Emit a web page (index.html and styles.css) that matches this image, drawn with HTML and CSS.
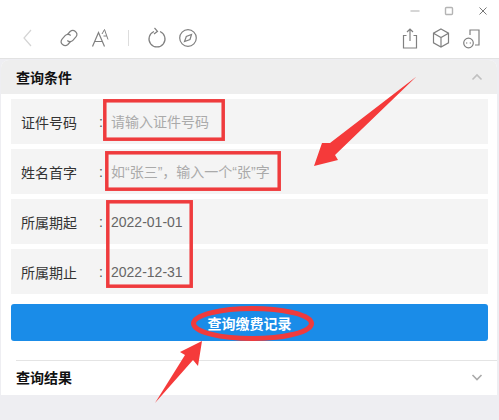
FILE: index.html
```html
<!DOCTYPE html>
<html lang="zh-CN">
<head>
    <meta charset="UTF-8">
    <meta name="viewport" content="width=device-width, initial-scale=1.0">
    <title>查询缴费记录</title>
    <link rel="stylesheet" href="styles.css">
</head>
<body>

<!-- Window controls -->
<div class="window-bar">
    <svg class="win-icon" viewBox="0 0 12 12"><path d="M1.5 6h9" stroke="#c4c4c4" stroke-width="1.4" fill="none"/></svg>
    <svg class="win-icon" viewBox="0 0 12 12"><rect x="2.5" y="2.5" width="7" height="7" rx="1" stroke="#b4b4b4" stroke-width="1.4" fill="none"/></svg>
    <svg class="win-icon" viewBox="0 0 12 12"><path d="M2.5 2.5l7 7M9.5 2.5l-7 7" stroke="#777" stroke-width="1" fill="none"/></svg>
</div>

<!-- Toolbar -->
<div class="toolbar">
    <div class="tool-group">
        <svg class="tool tool-back" viewBox="0 0 24 24"><path d="M15 4l-7 8 7 8" stroke="#d4d4d4"/></svg>
        <svg class="tool tool-link" viewBox="0 0 24 24"><path d="M10.500 8.500l2.600-3a4 4 0 0 1 6 5.200l-3.200 3.600a3.800 3.800 0 0 1-5.600.2"/><path d="M13.500 15.500l-2.600 3a4 4 0 0 1-6-5.200l3.200-3.600a3.800 3.800 0 0 1 5.600-.2"/></svg>
        <svg class="tool tool-font" viewBox="0 0 24 24"><path d="M4.500 20.500L10.500 6.500 16.500 20.500M6.800 15.500h7.400"/><path d="M14 8L16.500 3.500 20 13.500M15.500 10h3.300" stroke-width="1"/></svg>
        <span class="tool-sep"></span>
        <svg class="tool tool-refresh" viewBox="0 0 24 24"><path d="M9 5.500a8 8 0 1 0 6 0"/><path d="M9.500 2l3 3.300-3.500 2.700"/></svg>
        <svg class="tool tool-compass" viewBox="0 0 24 24"><circle cx="12" cy="12" r="8.300"/><path d="M15.500 8.500l-1.500 5-5.500 2 1.800-5z"/></svg>
    </div>
    <div class="tool-group">
        <svg class="tool" viewBox="0 0 24 24"><path d="M8.500 9.500H5.500v12.500h13V9.500h-3M12 15V3M9 6l3-3 3 3"/></svg>
        <svg class="tool tool-cube" viewBox="0 0 24 24"><path d="M12 3l7.500 4.200v9.600L12 21l-7.500-4.200V7.200zM4.500 7.200l7.500 4.300 7.500-4.300M12 11.500V21"/></svg>
        <svg class="tool tool-mini" viewBox="0 0 24 24"><path d="M10 9V4h9v15h-4"/><circle cx="8.500" cy="17" r="4.800"/><path d="M6.300 17h.9M9.800 17h.9" stroke-width="1.600"/></svg>
    </div>
</div>

<!-- Search panel -->
<div class="panel">
    <div class="panel-head">
        <strong>查询条件</strong>
        <svg class="arrow-icon" viewBox="0 0 14 8"><path d="M2.500 6.500L7 2l4.500 4.500" stroke="#c0c0c0"/></svg>
    </div>

    <div class="form-row">
        <label for="idNo">证件号码</label><span class="colon">:</span>
        <input id="idNo" type="text" placeholder="请输入证件号码">
    </div>
    <div class="form-row">
        <label for="nameInitial">姓名首字</label><span class="colon">:</span>
        <input id="nameInitial" type="text" placeholder="如“张三”，输入一个“张”字">
    </div>
    <div class="form-row">
        <label for="dateFrom">所属期起</label><span class="colon">:</span>
        <input id="dateFrom" type="text" value="2022-01-01">
    </div>
    <div class="form-row">
        <label for="dateTo">所属期止</label><span class="colon">:</span>
        <input id="dateTo" type="text" value="2022-12-31">
    </div>

    <button class="search-btn" type="button">查询缴费记录</button>

    <div class="panel-foot">
        <strong>查询结果</strong>
        <svg class="arrow-icon" viewBox="0 0 14 8"><path d="M2.500 2L7 6.500 11.500 2" stroke="#aaa"/></svg>
    </div>
</div>

<!-- Red marks drawn over the screenshot -->
<svg class="marks" viewBox="0 0 499 420">
    <g fill="none" stroke="#ef3b3d" stroke-width="3.500">
        <rect x="104.800" y="100.800" width="118.400" height="38.400"/>
        <rect x="106.800" y="152.800" width="172.400" height="36.400"/>
        <rect x="107.800" y="201.800" width="83.400" height="84.400"/>
    </g>
    <ellipse cx="252.500" cy="323.500" rx="59" ry="15" fill="none" stroke="#ef3b3d" stroke-width="5"/>
    <path d="M416.500 76.500L330 143l-8 0-8 23 24-6-3-5z" fill="#f53a3a"/>
    <path d="M155 403L185 355l-5-3 22-11-4 25-5-6z" fill="#f53a3a"/>
</svg>

</body>
</html>
```

FILE: styles.css
```css
/* Basic styling */
body {
    margin: 0;
    height: 420px;
    overflow: hidden;
    background-color: #eeeef2;
    font-family: "Liberation Sans", "Noto Sans CJK SC", sans-serif;
    font-size: 14px;
    color: #333333;
}

/* Window controls */
.window-bar {
    display: flex;
    justify-content: flex-end;
    gap: 22px;
    height: 22px;
    padding-right: 10px;
    background-color: #ffffff;
    align-items: center;
}

.win-icon {
    width: 12px;
    height: 12px;
}

/* Toolbar */
.toolbar {
    display: flex;
    justify-content: space-between;
    align-items: center;
    height: 31px;
    padding: 0 15px 5px 16px;
    background-color: #ffffff;
    border-bottom: 1px solid #e2e2e2;
}

.tool-group {
    display: flex;
    align-items: center;
    gap: 7px;
}

.tool {
    width: 24px;
    height: 24px;
    fill: none;
    stroke: #808080;
    stroke-width: 1.2;
}

.tool-link {
    margin-left: 10px;
}

.tool-sep {
    width: 1px;
    height: 16px;
    margin: 0 9px 0 9px;
    background-color: #dddddd;
}

/* Search panel */
.panel {
    margin: 1px 2px 0 1px;
    background-color: #ffffff;
    border-radius: 8px 8px 0 0;
}

.panel-head,
.panel-foot {
    display: flex;
    justify-content: space-between;
    align-items: center;
    height: 34px;
    padding: 0 13px 0 15px;
    color: #111111;
}

.panel-head {
    background-color: #eeeeee;
    border-radius: 8px 8px 0 0;
    margin-bottom: 5px;
}

.panel-foot {
    height: 32px;
    margin: 19px 0 0 15px;
    padding-left: 0;
    padding-bottom: 2px;
    border-top: 1px solid #e4e4e4;
}

.arrow-icon {
    width: 14px;
    height: 8px;
    fill: none;
    stroke-width: 1.6;
}

.form-row {
    display: flex;
    align-items: center;
    height: 45px;
    margin: 0 9px 5px 10px;
    padding-left: 10px;
    background-color: #f4f4f4;
}

.form-row label {
    width: 78px;
}

.colon {
    width: 12px;
    color: #555555;
}

.form-row input {
    flex: 1;
    min-width: 0;
    padding: 0;
    border: 0;
    outline: 0;
    background: transparent;
    font: inherit;
    color: #666666;
}

.form-row input::placeholder {
    color: #aaaaaa;
    opacity: 1;
}

.search-btn {
    display: block;
    width: 477px;
    height: 37px;
    margin: 10px 0 0 10px;
    padding: 0;
    border: 0;
    border-radius: 3px;
    background-color: #1a8ce8;
    color: #ffffff;
    font: bold 14px "Liberation Sans", "Noto Sans CJK SC", sans-serif;
}

/* Red marks over the screenshot */
.marks {
    position: absolute;
    top: 0;
    left: 0;
    width: 499px;
    height: 420px;
    pointer-events: none;
}
```
